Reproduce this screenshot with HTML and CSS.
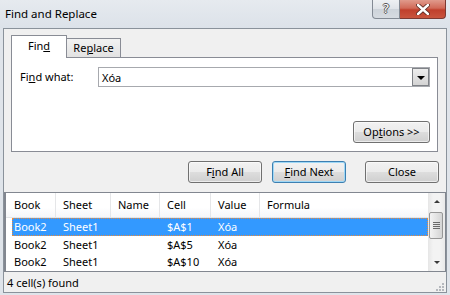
FILE: index.html
```html
<!DOCTYPE html>
<html lang="en">
<head>
    <meta charset="UTF-8">
    <title>Find and Replace</title>
    <link rel="stylesheet" href="styles.css">
</head>
<body>
    <div class="window">
        <div class="titlebar">
            <span class="title">Find and Replace</span>
            <div class="caption">
                <div class="cap-help">?</div>
                <div class="cap-close">
                    <svg width="14" height="11" viewBox="0 0 14 11">
                        <path d="M2 1 L12 10 M12 1 L2 10" stroke="#5b2a22" stroke-width="4.2" stroke-linecap="round"/>
                        <path d="M2 1 L12 10 M12 1 L2 10" stroke="#fff" stroke-width="2.4" stroke-linecap="round"/>
                    </svg>
                </div>
            </div>
        </div>

        <div class="body">
            <div class="tabs-area">
                <div class="tabs">
                    <div class="tab active">Fin<u>d</u></div>
                    <div class="tab">Re<u>p</u>lace</div>
                </div>
                <div class="panel">
                    <div class="field">
                        <label>Fi<u>n</u>d what:</label>
                        <div class="combo">
                            <span class="combo-text">Xóa</span>
                            <div class="drop"><span class="tri"></span></div>
                        </div>
                    </div>
                    <div class="panel-foot">
                        <button class="btn options">Op<u>t</u>ions &gt;&gt;</button>
                    </div>
                </div>
            </div>

            <div class="actions">
                <button class="btn">F<u>i</u>nd All</button>
                <button class="btn default"><u>F</u>ind Next</button>
                <button class="btn close">Close</button>
            </div>

            <div class="list">
                <div class="list-main">
                    <div class="head">
                        <div class="hc c1">Book</div>
                        <div class="hc c2">Sheet</div>
                        <div class="hc c3">Name</div>
                        <div class="hc c4">Cell</div>
                        <div class="hc c5">Value</div>
                        <div class="hc c6">Formula</div>
                    </div>
                    <div class="row selected">
                        <div class="rc r1">Book2</div>
                        <div class="rc c2">Sheet1</div>
                        <div class="rc c3"></div>
                        <div class="rc c4">$A$1</div>
                        <div class="rc c5">Xóa</div>
                        <div class="rc c6"></div>
                    </div>
                    <div class="row">
                        <div class="rc r1">Book2</div>
                        <div class="rc c2">Sheet1</div>
                        <div class="rc c3"></div>
                        <div class="rc c4">$A$5</div>
                        <div class="rc c5">Xóa</div>
                        <div class="rc c6"></div>
                    </div>
                    <div class="row">
                        <div class="rc r1">Book2</div>
                        <div class="rc c2">Sheet1</div>
                        <div class="rc c3"></div>
                        <div class="rc c4">$A$10</div>
                        <div class="rc c5">Xóa</div>
                        <div class="rc c6"></div>
                    </div>
                </div>
                <div class="scrollbar">
                    <div class="arrow up"></div>
                    <div class="thumb">
                        <span></span><span></span><span></span><span></span>
                    </div>
                    <div class="track"></div>
                    <div class="arrow down"></div>
                </div>
            </div>

            <div class="status">
                <span>4 cell(s) found</span>
                <div class="grip">
                    <i></i><i></i><i></i><i></i><i></i><i></i>
                </div>
            </div>
        </div>
    </div>
</body>
</html>
```

FILE: styles.css
```css
body{
    margin: 0;
    font-family: "Noto Sans", "Open Sans", sans-serif;
    font-size: 11px;
    color: #000;
}
.window{
    width: 450px;
    height: 295px;
    display: flex;
    flex-direction: column;
    background: #dfe4ea;
}
.titlebar{
    height: 28px;
    display: flex;
    justify-content: space-between;
    background: linear-gradient(#e6eaef, #dce2e9);
}
.title{
    padding: 6px 0 0 5px;
    font-size: 11.5px;
    line-height: 16px;
    color: #000;
}
.caption{
    display: flex;
    margin-right: 4px;
    height: 19px;
}
.cap-help{
    width: 26px;
    height: 18px;
    border: 1px solid #838a94;
    border-top: 0;
    border-radius: 0 0 0 4px;
    background: linear-gradient(#eef0f3 0%, #dfe3e8 50%, #cdd3da 51%, #d6dbe1 100%);
    text-align: center;
    font-family: "DejaVu Sans", sans-serif;
    font-size: 13px;
    line-height: 17px;
    color: #fff;
    text-shadow: 1px 0 #555, -1px 0 #555, 0 1px #555, 0 -1px #555;
}
.cap-close{
    width: 45px;
    height: 18px;
    border: 1px solid #7c3a32;
    border-left: 0;
    border-top: 0;
    border-radius: 0 0 4px 0;
    background: linear-gradient(#e09a8c 0%, #d16a58 45%, #c0402c 55%, #c9553e 100%);
    display: flex;
    align-items: center;
    justify-content: center;
}
.body{
    flex: 1;
    margin: 0 3px 2px 3px;
    border: 1px solid #8a929b;
    background: #f0f0f0;
    display: flex;
    flex-direction: column;
}
.tabs-area{
    padding: 7px 8px 0 7px;
}
.tabs{
    display: flex;
    align-items: flex-end;
    height: 21px;
}
.tab{
    height: 18px;
    padding: 0 6px 0 6px;
    border: 1px solid #898c95;
    border-bottom: 0;
    background: linear-gradient(#f2f2f2, #e2e2e2);
    line-height: 18px;
    margin-left: -1px;
    width: 41px;
    text-align: center;
}
.tab.active{
    position: relative;
    z-index: 1;
    height: 22px;
    margin-left: 0;
    margin-bottom: -1px;
    width: 42px;
    background: #fff;
    line-height: 19px;
    border-radius: 1px 1px 0 0;
}
.panel{
    height: 93px;
    border: 1px solid #898c95;
    background: #fff;
    padding: 9px 7px 8px 8px;
    box-sizing: border-box;
    height: 95px;
    display: flex;
    flex-direction: column;
    justify-content: space-between;
}
.field{
    display: flex;
    align-items: center;
}
.field label{
    width: 78px;
    line-height: 20px;
}
.combo{
    flex: 1;
    height: 20px;
    box-sizing: border-box;
    border: 1px solid #a7a9ae;
    display: flex;
    align-items: center;
    justify-content: space-between;
}
.combo-text{
    padding-left: 3px;
}
.drop{
    width: 15px;
    height: 16px;
    margin-right: 0;
    border: 1px solid #7f8287;
    background: linear-gradient(#ededed, #d4d4d4);
    display: flex;
    align-items: center;
    justify-content: center;
}
.tri{
    width: 0;
    height: 0;
    border-left: 4px solid transparent;
    border-right: 4px solid transparent;
    border-top: 4px solid #000;
    margin-top: 1px;
}
.panel-foot{
    display: flex;
    justify-content: flex-end;
}
.btn{
    height: 22px;
    width: 74px;
    padding: 0;
    border: 1px solid #707070;
    border-radius: 3px;
    background: linear-gradient(#f2f2f2 0%, #ebebeb 48%, #dddddd 52%, #cfcfcf 100%);
    box-shadow: inset 0 0 0 1px rgba(255,255,255,0.6);
    font-family: "Noto Sans", "Open Sans", sans-serif;
    font-size: 11px;
    color: #000;
    line-height: 18px;
}
.options{
    width: 77px;
}
.actions{
    display: flex;
    justify-content: flex-end;
    padding: 9px 7px 9px 0;
}
.btn.default{
    margin-left: 10px;
    border-color: #3c7fb1;
    box-shadow: inset 0 0 0 1px #9fd8f6;
    background: linear-gradient(#eaf6fd 0%, #d9f0fc 48%, #bee6fd 52%, #a7d9f5 100%);
    background: linear-gradient(#f2f2f2 0%, #ebebeb 48%, #dddddd 52%, #cfcfcf 100%);
}
.btn.close{
    margin-left: 19px;
}
.list{
    height: 78px;
    border: 1px solid #828790;
    border-left-width: 2px;
    background: #fff;
    display: flex;
}
.list-main{
    flex: 1;
}
.head{
    display: flex;
    height: 24px;
    border-bottom: 1px solid #e3e5e8;
    background: linear-gradient(#fff 60%, #f6f7f9);
}
.hc{
    padding-left: 7px;
    line-height: 24px;
    box-sizing: border-box;
    border-right: 1px solid #e5e6e8;
}
.c1{ width: 50px; padding-left: 8px; }
.c2{ width: 55px; }
.c3{ width: 49px; }
.c4{ width: 51px; }
.c5{ width: 49px; }
.c6{ flex: 1; border-right: 0; }
.row{
    display: flex;
    height: 17px;
    line-height: 17px;
    margin-left: 6px;
}
.rc{
    padding-left: 7px;
    box-sizing: border-box;
    white-space: nowrap;
}
.r1{
    width: 44px;
    padding-left: 2px;
}
.row.selected{
    background: #3399ff;
    color: #fff;
    outline: 1px dotted #e88a3c;
    outline-offset: -1px;
    height: 18px;
    line-height: 18px;
}
.scrollbar{
    width: 17px;
    display: flex;
    flex-direction: column;
    background: linear-gradient(90deg, #e6e6e6, #f3f3f3 30%, #f3f3f3 70%, #e9e9e9);
}
.arrow{
    height: 17px;
    display: flex;
    align-items: center;
    justify-content: center;
}
.arrow::after{
    content: "";
    border-left: 3px solid transparent;
    border-right: 3px solid transparent;
}
.arrow.up::after{
    border-bottom: 3px solid #3a3a3a;
}
.arrow.down::after{
    border-top: 3px solid #3a3a3a;
}
.thumb{
    height: 27px;
    margin: 2px 0 0 1px;
    width: 14px;
    box-sizing: border-box;
    border: 1px solid #979797;
    border-radius: 2px;
    background: linear-gradient(90deg, #f3f3f3, #e4e4e4 50%, #d4d4d4);
    display: flex;
    flex-direction: column;
    justify-content: center;
    align-items: center;
    gap: 1px;
}
.thumb span{
    width: 7px;
    height: 1px;
    background: #6a6a6a;
}
.track{
    flex: 1;
}
.status{
    flex: 1;
    display: flex;
    justify-content: space-between;
    align-items: center;
    padding-left: 3px;
    background: #f0f0f0;
}
.grip{
    width: 8px;
    height: 8px;
    align-self: flex-end;
    margin: 0 2px 1px 0;
    display: grid;
    grid-template-columns: repeat(3, 2px);
    gap: 1px;
    direction: rtl;
}
.grip i{
    width: 2px;
    height: 2px;
    background: #b5b8bd;
}
.grip i:nth-child(1){ grid-column: 1; grid-row: 1; }
.grip i:nth-child(2){ grid-column: 1; grid-row: 2; }
.grip i:nth-child(3){ grid-column: 2; grid-row: 2; }
.grip i:nth-child(4){ grid-column: 1; grid-row: 3; }
.grip i:nth-child(5){ grid-column: 2; grid-row: 3; }
.grip i:nth-child(6){ grid-column: 3; grid-row: 3; }
```
